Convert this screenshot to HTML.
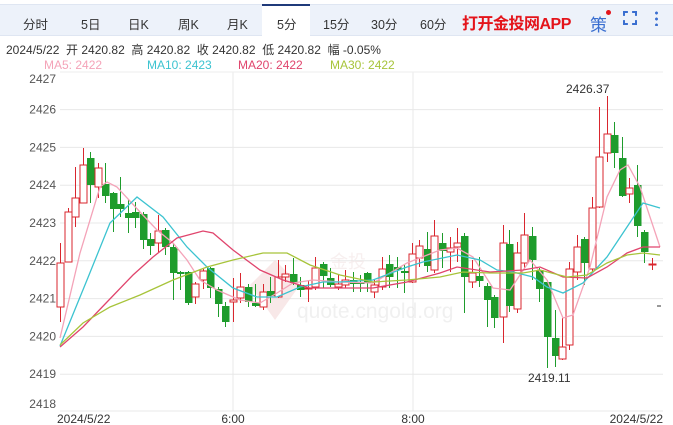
<!DOCTYPE html>
<html><head><meta charset="utf-8">
<style>
*{margin:0;padding:0;box-sizing:border-box}
body{width:673px;height:425px;background:#fff;font-family:"Liberation Sans","Noto Sans CJK SC",sans-serif;position:relative;overflow:hidden}
.bar{position:absolute;left:0;top:4px;width:673px;height:32px;background:#edf2fa;border-top:1px solid #dfe6f2;border-bottom:1px solid #dfe6f2}
.t{position:absolute;top:14px;font-size:12.5px;color:#333}
.act{position:absolute;left:262px;top:4px;width:48px;height:33px;background:#fff;border-top:2px solid #1f3a7a}
.app{position:absolute;left:462px;top:10px;font-size:16px;font-weight:bold;color:#e4141b;letter-spacing:-0.5px}
.info{position:absolute;left:6px;top:41px;font-size:12px;color:#333;white-space:pre}
.ma{position:absolute;top:58px;font-size:12px}
svg{position:absolute;left:0;top:0}
</style></head><body>
<div class="bar"></div>
<div class="act"></div>
<span class="t" style="left:23px">分时</span>
<span class="t" style="left:81px">5日</span>
<span class="t" style="left:128px">日K</span>
<span class="t" style="left:178px">周K</span>
<span class="t" style="left:227px">月K</span>
<span class="t" style="left:277px">5分</span>
<span class="t" style="left:323px">15分</span>
<span class="t" style="left:371px">30分</span>
<span class="t" style="left:420px">60分</span>
<span class="app">打开金投网APP</span>
<span class="t" style="left:590px;top:11px;font-size:17px;color:#3a6fd0">策</span>
<div style="position:absolute;left:606px;top:10px;width:5px;height:5px;border-radius:50%;background:#e4141b"></div>
<div style="position:absolute;left:623px;top:11px;width:14px;height:14px;border:2px solid #3a6fd0;clip-path:polygon(0 0,35% 0,35% 100%,0 100%,0 0,100% 0,100% 35%,0 35%,0 65%,100% 65%,100% 100%,65% 100%,65% 0)"></div>
<div style="position:absolute;left:655px;top:10px;width:3px;height:16px;background:radial-gradient(circle,#3a6fd0 1.3px,transparent 1.6px) 0 0/3px 6px"></div>
<div class="info">2024/5/22  开 2420.82  高 2420.82  收 2420.82  低 2420.82  幅 -0.05%</div>
<span class="ma" style="left:44px;color:#f4a3b8">MA5: 2422</span>
<span class="ma" style="left:147px;color:#3cc3d0">MA10: 2423</span>
<span class="ma" style="left:238px;color:#e0456d">MA20: 2422</span>
<span class="ma" style="left:330px;color:#a7c43a">MA30: 2422</span>
<svg id="c" width="673" height="425" xmlns="http://www.w3.org/2000/svg" font-family="Liberation Sans, sans-serif"></svg>
<script>
var s='';
var labels=[2427,2426,2425,2424,2423,2422,2421,2420,2419,2418];
labels.forEach(function(p){var y=412-(p-2418)*37.8;
 if(p<2427&&p>2418)s+='<line x1="60" x2="663" y1="'+y+'" y2="'+y+'" stroke="#e8e8e8"/>';
 if(p==2418)s+='<line x1="60" x2="663" y1="411" y2="411" stroke="#e8e8e8"/>';
 var ty=p==2427?83:(p==2418?408:y+4);
 s+='<text x="56" y="'+ty+'" font-size="12" fill="#555" text-anchor="end">'+p+'</text>';});
s+='<line x1="233" x2="233" y1="72" y2="411" stroke="#e8e8e8"/><line x1="413" x2="413" y1="72" y2="411" stroke="#e8e8e8"/>';
s+='<line x1="60" x2="663" y1="72" y2="72" stroke="#eee"/>';
// watermark
s+='<g opacity="0.5"><path d="M250 285 L275 260 L300 285 L275 320 Z" fill="#f3d3d3"/><text x="297" y="318" font-size="21" fill="#e2e2e2">quote.cngold.org</text><text x="330" y="268" font-size="18" fill="#f0e0e0">金投</text></g>';
var d=[
[60,263,307,243,322,1],[68,212,262,208,262,1],[75,198,217,167,227,1],[83,165,203,148,203,1],[90,158,185,152,203,0],[98,168,187,163,198,1],[105,184,196,163,203,0],[113,193,209,192,232,0],[120,204,209,177,217,0],[128,213,218,200,233,0],[135,212,218,202,228,0],[143,214,240,212,249,0],[150,239,246,233,255,0],[158,231,243,215,252,1],[165,230,247,228,255,0],[173,247,273,243,300,0],[180,272,274,271,290,0],[188,272,303,271,305,0],[195,284,297,282,304,1],[203,271,280,269,289,1],[210,268,288,267,298,0],[218,289,304,287,317,0],[225,306,322,302,327,0],[233,300,302,278,322,1],[240,287,298,273,303,1],[248,287,302,284,307,0],[255,303,306,284,307,0],[263,292,307,284,310,1],[270,291,296,277,303,0],[278,277,297,260,298,1],[285,274,277,265,282,1],[293,274,283,258,285,0],[300,285,290,277,297,0],[308,288,289,280,302,1],[315,268,287,257,290,1],[323,264,276,262,288,0],[330,278,285,268,287,0],[338,284,287,275,290,1],
[345,280,285,270,288,1],[353,280,284,272,292,0],[360,282,284,275,292,0],[367,273,283,272,292,0],[374,285,292,280,298,1],[382,269,287,257,290,1],[389,264,277,255,288,0],[397,267,270,257,288,0],[404,271,273,265,293,0],[412,254,282,243,283,1],[419,246,258,240,267,1],[427,249,266,232,272,0],[434,236,270,220,273,1],[442,243,251,233,268,0],[450,248,252,237,272,1],[457,243,247,228,262,1],[464,236,277,233,313,0],[472,273,282,260,288,1],[479,276,281,257,287,0],[487,286,300,283,327,0],[494,297,318,295,328,0],[503,243,317,225,343,1],[509,244,306,230,312,0],[517,253,309,242,313,1],[524,235,263,213,270,1],[532,236,260,227,280,0],[539,270,289,268,302,0],[547,282,337,280,368,0],[555,338,356,310,367,0],[562,347,359,318,360,1],[569,269,345,262,350,1],[577,247,272,235,280,1],[584,239,263,237,285,0],[592,208,269,197,273,1],[599,157,207,107,208,1],[607,134,153,96,162,1],[614,135,153,122,168,0],[622,158,196,137,197,0],[629,188,194,178,203,1],[637,185,226,165,237,0],[644,232,252,230,263,0],[652,264,264,258,270,1]];
d.forEach(function(c){var x=c[0],o=c[1],cl=c[2],t=Math.min(o,cl),b=Math.max(o,cl);var col=c[5]?'#d9262e':'#1e9c2c';
 if(c[5]){s+='<line x1="'+(x+.5)+'" x2="'+(x+.5)+'" y1="'+c[3]+'" y2="'+t+'" stroke="'+col+'"/><line x1="'+(x+.5)+'" x2="'+(x+.5)+'" y1="'+b+'" y2="'+c[4]+'" stroke="'+col+'"/>';
  s+='<rect x="'+(x-3)+'" y="'+t+'" width="7" height="'+Math.max(b-t,1)+'" fill="#fff" stroke="'+col+'"/>';}
 else{s+='<line x1="'+(x+.5)+'" x2="'+(x+.5)+'" y1="'+c[3]+'" y2="'+c[4]+'" stroke="'+col+'"/><rect x="'+(x-3)+'" y="'+t+'" width="7.5" height="'+Math.max(b-t,2)+'" fill="'+col+'"/>';}});
function pl(p,c){s+='<polyline fill="none" stroke="'+c+'" stroke-width="1.3" points="'+p+'"/>';}
pl("60,338 80,253 100,187 107,182 117,187 140,212 157,230 173,243 187,260 200,280 217,290 240,300 260,303 277,293 293,283 313,280 340,282 373,283 407,263 440,250 457,248 473,257 493,288 510,290 530,260 547,280 563,318 573,315 590,267 607,197 620,170 628,165 640,187 660,247","#f4a3b8");
pl("60,346 87,280 110,223 137,197 163,217 187,247 207,267 233,288 257,297 277,297 300,287 323,282 340,282 373,280 407,267 423,262 457,255 480,260 497,270 513,272 533,277 547,287 563,293 583,283 607,257 627,227 643,203 660,208","#3cc3d0");
pl("60,347 83,327 107,302 133,275 153,257 177,238 203,231 213,233 233,250 260,270 283,280 310,288 340,288 373,288 407,282 440,273 457,267 490,272 523,270 540,267 563,277 587,278 607,267 627,253 643,247 660,247","#e0456d");
pl("60,345 83,323 110,307 140,295 173,280 207,267 233,260 263,253 287,253 310,265 340,275 373,282 407,280 440,277 463,272 490,273 523,273 540,270 567,277 587,275 607,263 627,255 643,253 660,255","#a7c43a");
s+='<line x1="657" x2="661" y1="306" y2="306" stroke="#333"/>';
s+='<text x="566" y="93" font-size="12" fill="#333">2426.37</text><text x="528" y="382" font-size="12" fill="#333">2419.11</text>';
s+='<text x="57" y="423" font-size="12" fill="#333">2024/5/22</text><text x="233" y="423" font-size="12" fill="#333" text-anchor="middle">6:00</text><text x="413" y="423" font-size="12" fill="#333" text-anchor="middle">8:00</text><text x="663" y="423" font-size="12" fill="#333" text-anchor="end">2024/5/22</text>';
document.getElementById('c').innerHTML=s;
</script>
</body></html>
